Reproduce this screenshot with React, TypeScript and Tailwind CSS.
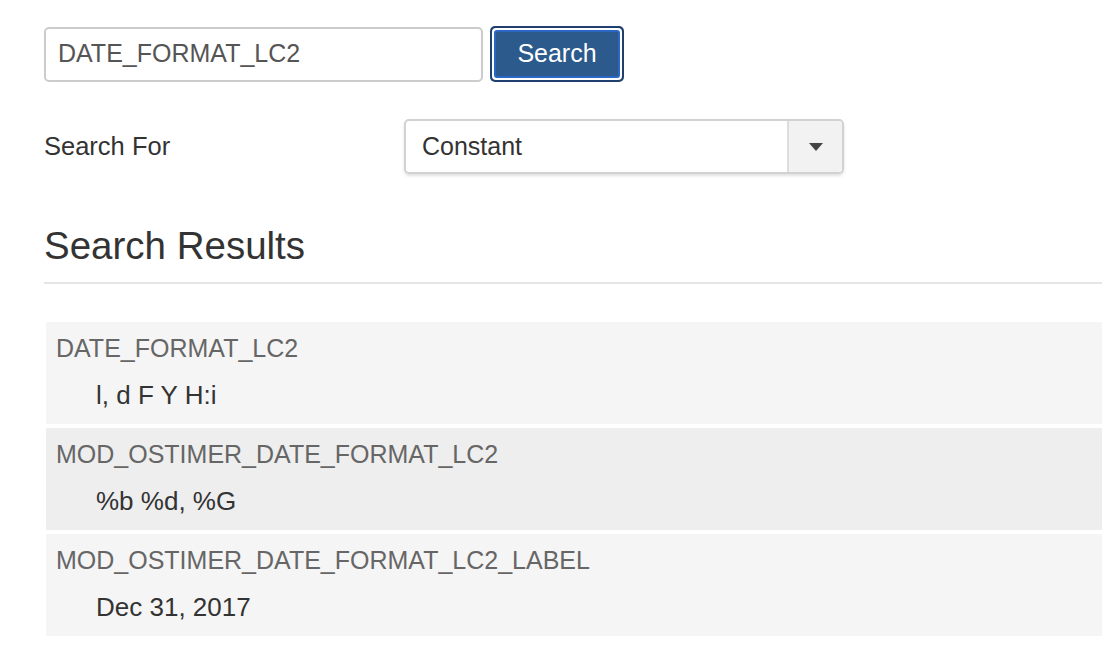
import React from 'react';

const results = [
  { key: 'DATE_FORMAT_LC2', value: 'l, d F Y H:i', shade: 'bg-[#f5f5f5]' },
  { key: 'MOD_OSTIMER_DATE_FORMAT_LC2', value: '%b %d, %G', shade: 'bg-[#eeeeee]' },
  { key: 'MOD_OSTIMER_DATE_FORMAT_LC2_LABEL', value: 'Dec 31, 2017', shade: 'bg-[#f5f5f5]' },
];

const App: React.FC = () => (
  <div className="min-h-screen bg-white pl-[44px] pt-[26px] text-[#333] font-['Liberation_Sans',Arial,sans-serif]">
    {/* Search bar */}
    <div className="flex items-center gap-[7px]">
      <div className="w-[439px] h-[55px] border-2 border-[#cccccc] rounded-[5px] flex items-center px-[12px] text-[25px] text-[#555]">
        DATE_FORMAT_LC2
      </div>
      <button className="h-[56px] w-[134px] rounded-[5px] bg-[#1f3f6e] p-[2px]">
        <span className="flex h-full w-full rounded-[4px] bg-white p-[2px]">
          <span className="flex h-full w-full items-center justify-center rounded-[3px] border-2 border-[#2a66c4] bg-[#2c5a8c] text-[25px] text-white">
            Search
          </span>
        </span>
      </button>
    </div>

    {/* Search for */}
    <div className="flex items-center mt-[37px]">
      <div className="w-[360px] text-[25.5px] text-[#333]">Search For</div>
      <div className="w-[440px] h-[55px] border-2 border-[#d2d2d2] rounded-[5px] flex shadow-[0_2px_3px_rgba(0,0,0,0.12)]">
        <div className="flex-1 flex items-center px-[16px] text-[25px] text-[#333]">Constant</div>
        <div className="w-[55px] border-l-2 border-[#dddddd] bg-[#f2f2f2] flex items-center justify-center rounded-r-[4px]">
          <svg width="14" height="8" viewBox="0 0 14 8">
            <path d="M0 0 L14 0 L7 8 Z" fill="#444" />
          </svg>
        </div>
      </div>
    </div>

    {/* Results */}
    <h2 className="mt-[49px] text-[38.5px] leading-[46px] text-[#333]">Search Results</h2>
    <hr className="mt-[13px] border-0 h-[2px] bg-[#e5e5e5]" />

    <div className="mt-[38px] pl-[2px] flex flex-col gap-[4px]">
      {results.map((r) => (
        <div key={r.key} className={`${r.shade} h-[102px] pl-[10px] pt-[11px]`}>
          <div className="text-[25px] leading-[30px] text-[#666]">{r.key}</div>
          <div className="mt-[17px] pl-[40px] text-[26px] leading-[30px] text-[#333]">{r.value}</div>
        </div>
      ))}
    </div>
  </div>
);

export default App;
